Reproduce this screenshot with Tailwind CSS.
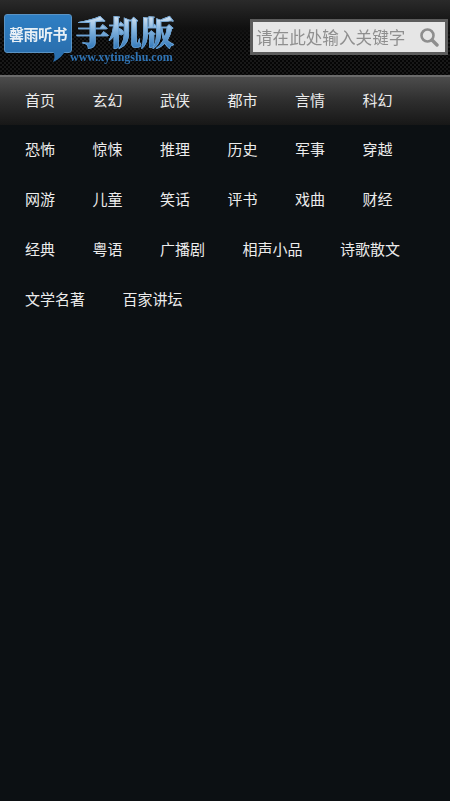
<!DOCTYPE html>
<html lang="zh">
<head>
<meta charset="utf-8">
<script src="https://cdn.jsdelivr.net/npm/@tailwindcss/browser@4"></script>
</head>
<body class="w-[450px] h-[801px] overflow-hidden bg-[#0c1013] font-['Noto_Sans_CJK_SC','Liberation_Sans',sans-serif]">
<header class="relative h-[75px] flex justify-between bg-[#0a0a0a] bg-[linear-gradient(#2a2a2a,#101010_28px,transparent_40px),repeating-conic-gradient(#181818_0_25%,#050505_0_50%)] bg-[size:100%_100%,4px_4px]">
  <div class="relative w-[180px] h-[75px] blur-[0.4px]">
    <div class="absolute left-[4px] top-[14px] w-[68px] h-[39px] rounded-[3px] bg-[linear-gradient(#2f7fc4,#2a6fae)] border border-[#5a93c4] flex items-center justify-center">
      <span class="text-[15px] leading-none font-bold text-[#e8f0f6] whitespace-nowrap tracking-[-0.5px]">馨雨听书</span>
    </div>
    <svg class="absolute left-[50px] top-[51px]" width="16" height="12" viewBox="0 0 16 12"><path d="M3 0 L15 0 Q12 7 3 11 Q6 6 3 0Z" fill="#2a6fae"/></svg>
    <span class="absolute left-[76px] top-[13px] h-[36px] text-[33px] leading-[36px] font-black whitespace-nowrap text-transparent bg-clip-text bg-[linear-gradient(#e8f0f8,#7fb0dc_50%,#2f76b8)] [-webkit-text-stroke:0.7px_#6ba3d6] font-['Noto_Serif_CJK_SC','Noto_Sans_CJK_SC',serif] tracking-[-0.5px]">手机版</span>
    <span class="absolute left-[70px] top-[51px] text-[12px] leading-[12px] font-['Liberation_Serif',serif] text-[#2f74b5] font-bold whitespace-nowrap">www.xytingshu.com</span>
  </div>
  <div class="mt-[19px] mr-[2px] w-[198px] h-[36px] border-[3px] border-[#5c5c5c] bg-[#e6e6e6] flex items-center justify-between pl-[3px] pr-[6px] blur-[0.4px]">
    <span class="text-[16.6px] leading-none text-[#8f8f8f] whitespace-nowrap">请在此处输入关键字</span>
    <svg width="20" height="20" viewBox="0 0 20 20" fill="none" stroke="#8e8e8e"><circle cx="8.5" cy="8.5" r="6" stroke-width="2.6"/><path d="M13 13 L18 18" stroke-width="3.4" stroke-linecap="round"/></svg>
  </div>
</header>
<nav class="text-[15px] leading-[48px] text-[#ececec]">
  <div class="h-[50px] px-[25px] flex gap-[37.5px] border-t-2 border-[#6a6a6a] box-border leading-[46px] bg-[linear-gradient(#4c4c4c,#2e2e2e_50%,#171717)]">
    <a>首页</a><a>玄幻</a><a>武侠</a><a>都市</a><a>言情</a><a>科幻</a>
  </div>
  <div class="h-[50px] px-[25px] flex gap-[37.5px]"><a>恐怖</a><a>惊悚</a><a>推理</a><a>历史</a><a>军事</a><a>穿越</a></div>
  <div class="h-[50px] px-[25px] flex gap-[37.5px]"><a>网游</a><a>儿童</a><a>笑话</a><a>评书</a><a>戏曲</a><a>财经</a></div>
  <div class="h-[50px] px-[25px] flex gap-[37.5px]"><a>经典</a><a>粤语</a><a>广播剧</a><a>相声小品</a><a>诗歌散文</a></div>
  <div class="h-[50px] px-[25px] flex gap-[37.5px]"><a>文学名著</a><a>百家讲坛</a></div>
</nav>
</body>
</html>
